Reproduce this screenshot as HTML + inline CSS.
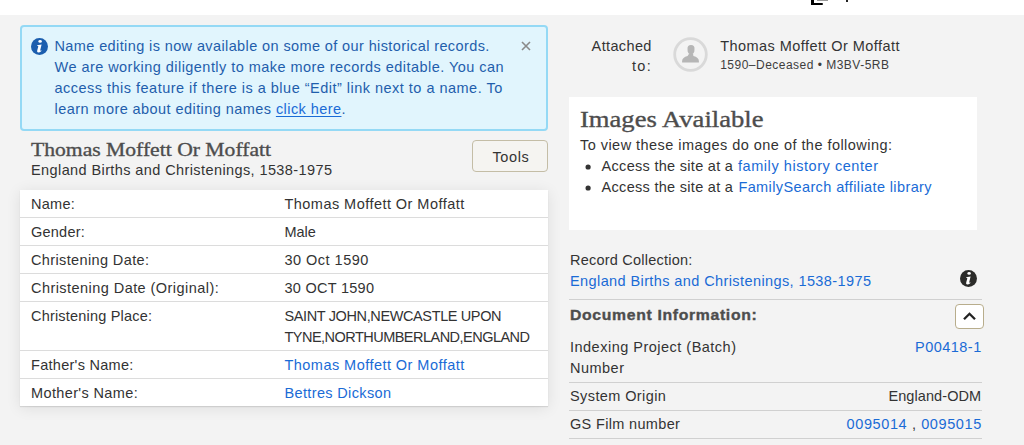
<!DOCTYPE html>
<html><head><meta charset="utf-8">
<style>
html,body{margin:0;padding:0;}
body{width:1024px;height:445px;overflow:hidden;position:relative;background:#f3f3f3;font-family:"Liberation Sans",sans-serif;}
.t{position:absolute;white-space:nowrap;line-height:21px;}
.t u{text-decoration:underline;text-underline-offset:1.5px;}
.mk{display:inline-block;width:0;height:0;}
.abs{position:absolute;box-sizing:border-box;}
#topbar{left:0;top:0;width:1024px;height:15px;background:#fff;}
#notice{left:20px;top:25px;width:528px;height:106px;background:#e1f5fd;border:2px solid #94d9f5;border-radius:4px;}
#table{left:20px;top:190px;width:528px;height:216px;background:#fff;box-shadow:0 1px 1px rgba(0,0,0,0.10), 0 2px 14px rgba(0,0,0,0.09);}
.hr{position:absolute;height:1px;background:#dcdcdc;}
#tools{left:472px;top:140px;width:76px;height:32px;background:#f5f4f1;border:1px solid #c4bda6;border-radius:4px;}
#imgbox{left:569px;top:97px;width:408px;height:133px;background:#fff;}
#collapse{left:955px;top:304px;width:29px;height:25px;background:#fff;border:1px solid #b8ad8c;border-radius:4px;}
</style></head><body>
<div id="topbar" class="abs"></div>
<div class="abs" style="left:811px;top:0;width:3px;height:5px;background:#000"></div>
<div class="abs" style="left:811px;top:2.5px;width:12px;height:2.5px;background:#000;border-radius:0 1px 1px 0"></div>
<div class="abs" style="left:817px;top:0;width:11px;height:1px;background:#999"></div>
<div class="abs" style="left:846px;top:0;width:1.5px;height:2px;background:#222"></div>
<div id="notice" class="abs"></div>
<svg class="abs" style="left:31px;top:38px" width="17" height="17" viewBox="0 0 17 17"><circle cx="8.5" cy="8.5" r="8.5" fill="#1b5eae"/><ellipse cx="9.1" cy="3.4" rx="1.75" ry="1.4" fill="#fff"/><path d="M6.0 7.2 L10.6 6.4 L9.2 12.2 Q9.0 12.9 9.8 12.5 L10.4 12.1 L10.2 13.2 Q8.7 14.6 7.0 14.5 Q5.7 14.3 6.2 12.6 L7.3 8.5 Q7.5 7.8 6.6 7.9 Z" fill="#fff"/></svg>
<svg class="abs" style="left:521px;top:41px" width="10" height="10" viewBox="0 0 10 10"><path d="M1 1 L9 9 M9 1 L1 9" stroke="#8a8a8a" stroke-width="1.6"/></svg>
<div id="tools" class="abs"></div>
<div id="table" class="abs"></div>
<div class="hr" style="left:20px;top:217px;width:528px"></div>
<div class="hr" style="left:20px;top:245px;width:528px"></div>
<div class="hr" style="left:20px;top:273px;width:528px"></div>
<div class="hr" style="left:20px;top:301px;width:528px"></div>
<div class="hr" style="left:20px;top:350px;width:528px"></div>
<div class="hr" style="left:20px;top:378px;width:528px"></div>
<svg class="abs" style="left:673px;top:37px" width="35" height="35" viewBox="0 0 35 35"><circle cx="17.5" cy="17.5" r="15.8" fill="#f3f3f3" stroke="#d9d9d9" stroke-width="2.8"/><path d="M14.5 12 Q14.3 8 18 8 Q21.7 8 21.5 12 L21.3 14.2 Q20.8 17.2 18 17.4 Q15.2 17.2 14.7 14.2 Z" fill="#b6b6b6"/><path d="M15.9 17 L20.1 17 L20.4 19 Q25.7 20.3 25.9 24 L25.9 25.4 L9.1 25.4 L9.1 24 Q9.3 20.3 14.6 19 Z" fill="#b6b6b6"/></svg>
<div id="imgbox" class="abs"></div>
<svg class="abs" style="left:585px;top:163.5px" width="6" height="6"><circle cx="3.1" cy="3" r="2.6" fill="#333"/></svg>
<svg class="abs" style="left:585px;top:184.7px" width="6" height="6"><circle cx="3.1" cy="3" r="2.6" fill="#333"/></svg>
<svg class="abs" style="left:959.7px;top:270.1px" width="17" height="17" viewBox="0 0 17 17"><circle cx="8.5" cy="8.5" r="8.5" fill="#2b2b29"/><ellipse cx="9.1" cy="3.4" rx="1.75" ry="1.4" fill="#fff"/><path d="M6.0 7.2 L10.6 6.4 L9.2 12.2 Q9.0 12.9 9.8 12.5 L10.4 12.1 L10.2 13.2 Q8.7 14.6 7.0 14.5 Q5.7 14.3 6.2 12.6 L7.3 8.5 Q7.5 7.8 6.6 7.9 Z" fill="#fff"/></svg>
<div class="hr" style="left:569px;top:299px;width:413px;background:#d0d0d0"></div>
<div id="collapse" class="abs"></div>
<svg class="abs" style="left:955px;top:304px" width="29" height="25" viewBox="0 0 29 25"><path d="M9.0 15.3 L14.5 9.8 L20.0 15.3" fill="none" stroke="#222" stroke-width="2.3"/></svg>
<div class="hr" style="left:569px;top:382px;width:413px;background:#d0d0d0"></div>
<div class="hr" style="left:569px;top:410px;width:413px;background:#d0d0d0"></div>
<div class="hr" style="left:569px;top:438px;width:413px;background:#d0d0d0"></div>
<div class="t" id="t0" style='top:36.00px;font-size:14.5px;font-family:"Liberation Sans", sans-serif;font-weight:normal;color:#1f5eac;letter-spacing:0.390px;left:54.50px;'><span>Name editing is now available on some of our historical records.</span></div>
<div class="t" id="t1" style='top:57.00px;font-size:14.5px;font-family:"Liberation Sans", sans-serif;font-weight:normal;color:#1f5eac;letter-spacing:0.453px;left:54.50px;'><span>We are working diligently to make more records editable. You can</span></div>
<div class="t" id="t2" style='top:78.00px;font-size:14.5px;font-family:"Liberation Sans", sans-serif;font-weight:normal;color:#1f5eac;letter-spacing:0.484px;left:54.50px;'><span>access this feature if there is a blue “Edit” link next to a name. To</span></div>
<div class="t" id="t3" style='top:99.00px;font-size:14.5px;font-family:"Liberation Sans", sans-serif;font-weight:normal;color:#1f5eac;letter-spacing:0.433px;left:54.50px;'><span>learn more about editing names <u style="color:#1a6bd6">click here</u>.</span></div>
<div class="t" id="t4" style='top:138.80px;font-size:19.5px;font-family:"Liberation Serif", serif;font-weight:normal;color:#4d4d4d;letter-spacing:0.000px;left:31.00px;transform:scaleX(1.1088);transform-origin:0 0;-webkit-text-stroke:0.35px #4d4d4d;'><span>Thomas Moffett Or Moffatt</span></div>
<div class="t" id="t5" style='top:159.80px;font-size:14.5px;font-family:"Liberation Sans", sans-serif;font-weight:normal;color:#333;letter-spacing:0.401px;left:31.00px;'><span>England Births and Christenings, 1538-1975</span></div>
<div class="t" id="t6" style='top:146.50px;font-size:14.5px;font-family:"Liberation Sans", sans-serif;font-weight:normal;color:#333;letter-spacing:0.635px;left:492.40px;'><span>Tools</span></div>
<div class="t" id="t7" style='top:194.00px;font-size:14.5px;font-family:"Liberation Sans", sans-serif;font-weight:normal;color:#333;letter-spacing:0.270px;left:31.00px;'><span>Name:</span></div>
<div class="t" id="t8" style='top:194.00px;font-size:14.5px;font-family:"Liberation Sans", sans-serif;font-weight:normal;color:#333;letter-spacing:0.458px;left:284.50px;'><span>Thomas Moffett Or Moffatt</span></div>
<div class="t" id="t9" style='top:222.00px;font-size:14.5px;font-family:"Liberation Sans", sans-serif;font-weight:normal;color:#333;letter-spacing:0.232px;left:31.00px;'><span>Gender:</span></div>
<div class="t" id="t10" style='top:222.00px;font-size:14.5px;font-family:"Liberation Sans", sans-serif;font-weight:normal;color:#333;letter-spacing:-0.046px;left:284.50px;'><span>Male</span></div>
<div class="t" id="t11" style='top:250.00px;font-size:14.5px;font-family:"Liberation Sans", sans-serif;font-weight:normal;color:#333;letter-spacing:0.373px;left:31.00px;'><span>Christening Date:</span></div>
<div class="t" id="t12" style='top:250.00px;font-size:14.5px;font-family:"Liberation Sans", sans-serif;font-weight:normal;color:#333;letter-spacing:0.480px;left:284.50px;'><span>30 Oct 1590</span></div>
<div class="t" id="t13" style='top:278.00px;font-size:14.5px;font-family:"Liberation Sans", sans-serif;font-weight:normal;color:#333;letter-spacing:0.445px;left:31.00px;'><span>Christening Date (Original):</span></div>
<div class="t" id="t14" style='top:278.00px;font-size:14.5px;font-family:"Liberation Sans", sans-serif;font-weight:normal;color:#333;letter-spacing:0.270px;left:284.50px;'><span>30 OCT 1590</span></div>
<div class="t" id="t15" style='top:306.00px;font-size:14.5px;font-family:"Liberation Sans", sans-serif;font-weight:normal;color:#333;letter-spacing:0.196px;left:31.00px;'><span>Christening Place:</span></div>
<div class="t" id="t16" style='top:306.00px;font-size:14.5px;font-family:"Liberation Sans", sans-serif;font-weight:normal;color:#333;letter-spacing:-0.380px;left:284.50px;'><span>SAINT JOHN,NEWCASTLE UPON</span></div>
<div class="t" id="t17" style='top:355.00px;font-size:14.5px;font-family:"Liberation Sans", sans-serif;font-weight:normal;color:#333;letter-spacing:0.279px;left:31.00px;'><span>Father's Name:</span></div>
<div class="t" id="t18" style='top:355.00px;font-size:14.5px;font-family:"Liberation Sans", sans-serif;font-weight:normal;color:#1a6bd6;letter-spacing:0.458px;left:284.50px;'><span>Thomas Moffett Or Moffatt</span></div>
<div class="t" id="t19" style='top:383.00px;font-size:14.5px;font-family:"Liberation Sans", sans-serif;font-weight:normal;color:#333;letter-spacing:0.370px;left:31.00px;'><span>Mother's Name:</span></div>
<div class="t" id="t20" style='top:383.00px;font-size:14.5px;font-family:"Liberation Sans", sans-serif;font-weight:normal;color:#1a6bd6;letter-spacing:0.354px;left:284.50px;'><span>Bettres Dickson</span></div>
<div class="t" id="t21" style='top:327.00px;font-size:14.5px;font-family:"Liberation Sans", sans-serif;font-weight:normal;color:#333;letter-spacing:-0.526px;left:284.50px;'><span>TYNE,NORTHUMBERLAND,ENGLAND</span></div>
<div class="t" id="t22" style='top:35.80px;font-size:14.5px;font-family:"Liberation Sans", sans-serif;font-weight:normal;color:#333;letter-spacing:0.364px;right:372.24px;'><span>Attached</span></div>
<div class="t" id="t23" style='top:56.00px;font-size:14.5px;font-family:"Liberation Sans", sans-serif;font-weight:normal;color:#333;letter-spacing:1.337px;right:371.86px;'><span>to:</span></div>
<div class="t" id="t24" style='top:35.50px;font-size:14.5px;font-family:"Liberation Sans", sans-serif;font-weight:normal;color:#333;letter-spacing:0.442px;left:720.20px;'><span>Thomas Moffett Or Moffatt</span></div>
<div class="t" id="t25" style='top:54.50px;font-size:12px;font-family:"Liberation Sans", sans-serif;font-weight:normal;color:#3d3d3d;letter-spacing:0.485px;left:720.20px;'><span>1590–Deceased • M3BV-5RB</span></div>
<div class="t" id="t26" style='top:108.61px;font-size:23px;font-family:"Liberation Serif", serif;font-weight:normal;color:#4d4d4d;letter-spacing:0.000px;left:580.00px;transform:scaleX(1.1569);transform-origin:0 0;-webkit-text-stroke:0.35px #4d4d4d;'><span>Images Available</span></div>
<div class="t" id="t27" style='top:134.80px;font-size:14.5px;font-family:"Liberation Sans", sans-serif;font-weight:normal;color:#333;letter-spacing:0.459px;left:580.00px;'><span>To view these images do one of the following:</span></div>
<div class="t" id="t28" style='top:155.61px;font-size:14.5px;font-family:"Liberation Sans", sans-serif;font-weight:normal;color:#333;letter-spacing:0.293px;left:601.60px;'><span>Access the site at a</span></div>
<div class="t" id="t29" style='top:155.61px;font-size:14.5px;font-family:"Liberation Sans", sans-serif;font-weight:normal;color:#1a6bd6;letter-spacing:0.553px;left:738.00px;'><span>family history center</span></div>
<div class="t" id="t30" style='top:176.61px;font-size:14.5px;font-family:"Liberation Sans", sans-serif;font-weight:normal;color:#333;letter-spacing:0.293px;left:601.60px;'><span>Access the site at a</span></div>
<div class="t" id="t31" style='top:176.61px;font-size:14.5px;font-family:"Liberation Sans", sans-serif;font-weight:normal;color:#1a6bd6;letter-spacing:0.391px;left:738.40px;'><span>FamilySearch affiliate library</span></div>
<div class="t" id="t32" style='top:249.61px;font-size:14.5px;font-family:"Liberation Sans", sans-serif;font-weight:normal;color:#333;letter-spacing:0.224px;left:570.00px;'><span>Record Collection:</span></div>
<div class="t" id="t33" style='top:270.50px;font-size:14.5px;font-family:"Liberation Sans", sans-serif;font-weight:normal;color:#1a6bd6;letter-spacing:0.401px;left:570.00px;'><span>England Births and Christenings, 1538-1975</span></div>
<div class="t" id="t34" style='top:305.00px;font-size:14px;font-family:"Liberation Sans", sans-serif;font-weight:bold;color:#4d4d4d;letter-spacing:0.600px;left:570.00px;transform:scaleX(1.1249);transform-origin:0 0;-webkit-text-stroke:0.35px #4d4d4d;'><span>Document Information:</span></div>
<div class="t" id="t35" style='top:337.00px;font-size:14.5px;font-family:"Liberation Sans", sans-serif;font-weight:normal;color:#333;letter-spacing:0.489px;left:570.00px;'><span>Indexing Project (Batch)</span></div>
<div class="t" id="t36" style='top:358.00px;font-size:14.5px;font-family:"Liberation Sans", sans-serif;font-weight:normal;color:#333;letter-spacing:0.484px;left:570.00px;'><span>Number</span></div>
<div class="t" id="t37" style='top:337.00px;font-size:14.5px;font-family:"Liberation Sans", sans-serif;font-weight:normal;color:#1a6bd6;letter-spacing:0.473px;right:42.33px;'><span>P00418-1</span></div>
<div class="t" id="t38" style='top:386.00px;font-size:14.5px;font-family:"Liberation Sans", sans-serif;font-weight:normal;color:#333;letter-spacing:0.403px;left:570.00px;'><span>System Origin</span></div>
<div class="t" id="t39" style='top:386.00px;font-size:14.5px;font-family:"Liberation Sans", sans-serif;font-weight:normal;color:#333;letter-spacing:0.093px;right:42.71px;'><span>England-ODM</span></div>
<div class="t" id="t40" style='top:413.71px;font-size:14.5px;font-family:"Liberation Sans", sans-serif;font-weight:normal;color:#333;letter-spacing:0.334px;left:570.00px;'><span>GS Film number</span></div>
<div class="t" id="t41" style='top:413.71px;font-size:14.5px;font-family:"Liberation Sans", sans-serif;font-weight:normal;color:#1a6bd6;letter-spacing:0.600px;right:42.20px;'><span>0095014 <span style="color:#333">,</span> 0095015</span></div>
</body></html>
